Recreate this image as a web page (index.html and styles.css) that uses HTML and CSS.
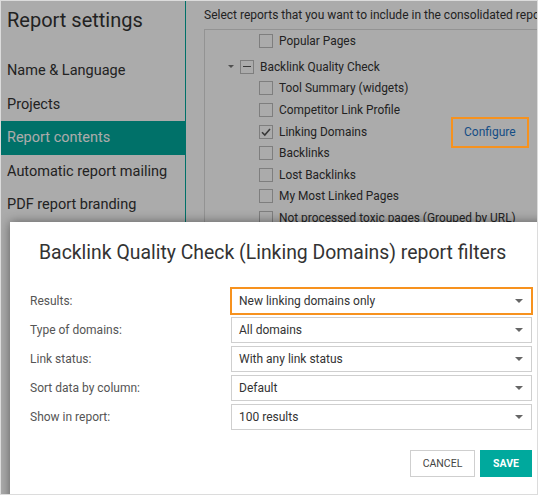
FILE: index.html
```html
<!DOCTYPE html>
<html>
<head>
<meta charset="utf-8">
<link rel="stylesheet" href="styles.css">
</head>
<body>
<div class="frame">
  <div class="app">
    <aside class="sidebar">
      <h1 class="side-title">Report settings</h1>
      <nav class="menu">
        <div class="menu-item">Name &amp; Language</div>
        <div class="menu-item">Projects</div>
        <div class="menu-item active">Report contents</div>
        <div class="menu-item">Automatic report mailing</div>
        <div class="menu-item">PDF report branding</div>
      </nav>
    </aside>
    <main class="content">
      <p class="hint">Select reports that you want to include in the consolidated report</p>
      <div class="tree">
        <div class="row child"><span class="cb"></span><span class="lbl">Popular Pages</span></div>
        <div class="row group"><span class="caret"></span><span class="cb partial"></span><span class="lbl">Backlink Quality Check</span></div>
        <div class="row child"><span class="cb"></span><span class="lbl">Tool Summary (widgets)</span></div>
        <div class="row child"><span class="cb"></span><span class="lbl">Competitor Link Profile</span></div>
        <div class="row child"><span class="cb checked"><svg viewBox="0 0 14 14" width="14" height="14"><path d="M3 7.2 L5.8 10 L11 4" fill="none" stroke="#555" stroke-width="1.6"/></svg></span><span class="lbl">Linking Domains</span><span class="configure">Configure</span></div>
        <div class="row child"><span class="cb"></span><span class="lbl">Backlinks</span></div>
        <div class="row child"><span class="cb"></span><span class="lbl">Lost Backlinks</span></div>
        <div class="row child"><span class="cb"></span><span class="lbl">My Most Linked Pages</span></div>
        <div class="row child"><span class="cb"></span><span class="lbl">Not processed toxic pages (Grouped by URL)</span></div>
      </div>
    </main>
  </div>
  <div class="overlay"></div>
  <div class="annot-configure"></div>
  <div class="modal">
    <h2 class="modal-title">Backlink Quality Check (Linking Domains) report filters</h2>
    <div class="form">
      <div class="field">
        <label class="flabel">Results:</label>
        <div class="select highlight"><span>New linking domains only</span><i class="arrow"></i></div>
      </div>
      <div class="field">
        <label class="flabel">Type of domains:</label>
        <div class="select"><span>All domains</span><i class="arrow"></i></div>
      </div>
      <div class="field">
        <label class="flabel">Link status:</label>
        <div class="select"><span>With any link status</span><i class="arrow"></i></div>
      </div>
      <div class="field">
        <label class="flabel">Sort data by column:</label>
        <div class="select"><span>Default</span><i class="arrow"></i></div>
      </div>
      <div class="field">
        <label class="flabel">Show in report:</label>
        <div class="select"><span>100 results</span><i class="arrow"></i></div>
      </div>
    </div>
    <div class="actions">
      <button class="btn cancel">CANCEL</button>
      <button class="btn save">SAVE</button>
    </div>
  </div>
</div>
</body>
</html>
```
FILE: styles.css
```css
html, body {
  margin: 0;
  padding: 0;
  background: #ffffff;
}
body {
  font-family: Roboto, "Liberation Sans", Arial, sans-serif;
}
.frame {
  position: relative;
  width: 536px;
  height: 493px;
  border: 1px solid #dcdcdc;
  overflow: hidden;
  background: #ffffff;
}
.app {
  display: flex;
  height: 100%;
}
.sidebar {
  width: 184px;
  flex: none;
  border-right: 1px solid #00a99d;
  color: #333;
}
.side-title {
  margin: 7px 0 0 0;
  padding-left: 6px;
  font-size: 20px;
  font-weight: 400;
  line-height: 24px;
  color: #333;
}
.menu {
  margin-top: 22px;
}
.menu-item {
  height: 33.5px;
  line-height: 33.5px;
  padding-left: 6px;
  font-size: 14.5px;
  color: #333;
  white-space: nowrap;
}
.menu-item.active {
  background: #00a99d;
  color: #ffffff;
}
.content {
  flex: 1;
  padding-left: 18px;
  min-width: 0;
}
.hint {
  margin: 6px 0 0 0;
  font-size: 12px;
  line-height: 16px;
  color: #333;
  white-space: nowrap;
}
.tree {
  margin-top: 6px;
  border-top: 1px solid #dcdcdc;
  border-left: 1px solid #dcdcdc;
  height: 400px;
  padding-top: 0.5px;
}
.row {
  display: flex;
  align-items: center;
  height: 21.6px;
  font-size: 11.9px;
  color: #333;
  white-space: nowrap;
}
.row.child {
  padding-left: 54px;
}
.row.group {
  padding-left: 23px;
  margin-top: 4px;
}
.caret {
  width: 0;
  height: 0;
  border-left: 3.5px solid transparent;
  border-right: 3.5px solid transparent;
  border-top: 3.5px solid #777;
  margin-right: 6px;
}
.cb {
  width: 12px;
  height: 12px;
  border: 1px solid #bdbdbd;
  background: #fff;
  flex: none;
  position: relative;
  margin-right: 6px;
}
.cb svg {
  position: absolute;
  left: -1px;
  top: -1px;
}
.cb.partial::after {
  content: "";
  position: absolute;
  left: 2px;
  right: 2px;
  top: 5.5px;
  height: 1px;
  background: #555;
}
.lbl {
  line-height: 16px;
}
.configure {
  margin-left: 97px;
  color: #1f75c8;
  font-size: 12px;
}
.overlay {
  position: absolute;
  inset: 0;
  background: rgba(0, 0, 0, 0.33);
}
.annot-configure {
  position: absolute;
  left: 450px;
  top: 116px;
  width: 74px;
  height: 27px;
  border: 2px solid #f7921e;
}
.modal {
  position: absolute;
  left: 9px;
  top: 221px;
  width: 540px;
  height: 290px;
  background: #ffffff;
  box-shadow: 0 0 10px rgba(0, 0, 0, 0.45);
  box-sizing: border-box;
  padding: 16px 0 0 20px;
}
.modal-title {
  margin: 0 0 0 9px;
  font-size: 19.4px;
  font-weight: 400;
  line-height: 30px;
  color: #333;
  white-space: nowrap;
}
.form {
  margin-top: 20px;
  display: flex;
  flex-direction: column;
  gap: 3px;
  width: 502px;
}
.field {
  display: flex;
  align-items: center;
  height: 26px;
}
.flabel {
  width: 201px;
  flex: none;
  font-size: 12px;
  color: #555;
}
.select {
  flex: 1;
  height: 24px;
  border: 1px solid #cfcfcf;
  display: flex;
  align-items: center;
  padding: 0 8px 0 7px;
  font-size: 12px;
  color: #333;
  justify-content: space-between;
}
.select.highlight {
  outline: 2px solid #f7921e;
  outline-offset: -1px;
}
.arrow {
  width: 0;
  height: 0;
  border-left: 4.5px solid transparent;
  border-right: 4.5px solid transparent;
  border-top: 4.5px solid #666;
}
.actions {
  display: flex;
  justify-content: flex-end;
  gap: 5px;
  width: 502px;
  margin-top: 20px;
}
.btn {
  height: 27px;
  font-family: Roboto, "Liberation Sans", Arial, sans-serif;
  font-size: 10.5px;
  border-radius: 0;
  cursor: pointer;
}
.btn.cancel {
  width: 65px;
  background: #fff;
  border: 1px solid #cfcfcf;
  color: #444;
}
.btn.save {
  width: 52px;
  background: #00a99d;
  border: none;
  color: #fff;
  font-weight: 700;
}
```
